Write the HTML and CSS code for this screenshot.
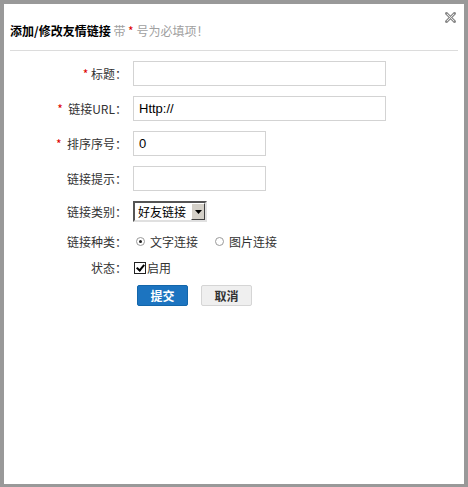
FILE: index.html
```html
<!DOCTYPE html>
<html lang="zh-CN">

<head>
    <meta charset="UTF-8">
    <meta name="viewport" content="width=device-width, initial-scale=1.0">
    <title>添加/修改友情链接</title>
    <link rel="stylesheet" href="styles.css">
</head>

<body>
    <div class="dialog">
        <div class="dialog-head">
            <h2>添加/修改友情链接 <span class="tip">带 <em>*</em> 号为必填项！</span></h2>
            <a href="#" class="close" title="关闭">
                <svg width="11" height="11" viewBox="0 0 11 11">
                    <path d="M1.5 1.5 L9.5 9.5 M9.5 1.5 L1.5 9.5" stroke="#8c8c8c" stroke-width="3" stroke-linecap="square" fill="none"/>
                    <path d="M2 2 L9 9 M9 2 L2 9" stroke="#e6e6e6" stroke-width="1" fill="none"/>
                </svg>
            </a>
        </div>

        <form class="link-form" action="#" method="post">
            <div class="row">
                <label for="title"><em>*</em> 标题：</label>
                <input type="text" id="title" name="title" class="text long">
            </div>
            <div class="row">
                <label for="url"><em>*</em>&nbsp; 链接URL：</label>
                <input type="text" id="url" name="url" class="text long" value="Http://">
            </div>
            <div class="row">
                <label for="sort"><em>*</em>&nbsp; 排序序号：</label>
                <input type="text" id="sort" name="sort" class="text short" value="0">
            </div>
            <div class="row">
                <label for="hint">链接提示：</label>
                <input type="text" id="hint" name="hint" class="text short">
            </div>
            <div class="row row-select">
                <label for="type">链接类别：</label>
                <div class="select">
                    <select id="type" name="type">
                        <option>好友链接</option>
                        <option>合作伙伴</option>
                    </select>
                    <span class="select-arrow">
                        <svg width="7" height="4" viewBox="0 0 7 4"><path d="M0 0 H7 L3.5 4 Z" fill="#000"/></svg>
                    </span>
                </div>
            </div>
            <div class="row row-radio">
                <label>链接种类：</label>
                <div class="options">
                    <label class="opt"><input type="radio" name="kind" value="text" checked>文字连接</label>
                    <label class="opt"><input type="radio" name="kind" value="image">图片连接</label>
                </div>
            </div>
            <div class="row row-check">
                <label for="status">状态：</label>
                <label class="opt check"><input type="checkbox" id="status" name="status" checked>启用</label>
            </div>
            <div class="row row-buttons">
                <span></span>
                <div class="buttons">
                    <button type="submit" class="btn btn-primary">提交</button>
                    <button type="button" class="btn">取消</button>
                </div>
            </div>
        </form>
    </div>
</body>

</html>
```

FILE: styles.css
```css
body {
    margin: 0;
    background: #999;
    font-family: "Noto Sans CJK TC", "Noto Sans CJK SC", "Liberation Sans", sans-serif;
    font-size: 12px;
    color: #333;
}

.dialog {
    position: relative;
    margin: 4px 4px 0 4px;
    height: 480px;
    background: #fff;
}

.dialog-head {
    margin: 0 6px;
    padding: 20px 0 12px;
    border-bottom: 1px solid #dcdcdc;
}

.dialog-head h2 {
    margin: 0;
    font-size: 12px;
    line-height: 14px;
    font-weight: bold;
    color: #000;
}

.tip {
    font-weight: normal;
    color: #a0a0a0;
}

em {
    font-style: normal;
    color: #d00;
}

.close {
    position: absolute;
    top: 8px;
    right: 8px;
    display: block;
    width: 11px;
    height: 11px;
}

.close svg {
    display: block;
}

.link-form {
    padding-top: 10px;
}

.row {
    display: flex;
    align-items: center;
    height: 25px;
    margin-bottom: 10px;
}

.row > label,
.row > span:first-child {
    box-sizing: border-box;
    flex: 0 0 120px;
    margin-right: 9px;
    padding-right: 0;
    text-align: right;
    color: #333;
}

.row > label {
    margin-right: 6px;
    flex-basis: 123px;
}

.text {
    box-sizing: border-box;
    height: 25px;
    margin: 0;
    padding: 0 5px;
    border: 1px solid #d3d3d3;
    font-family: "Liberation Sans", Arial, sans-serif;
    font-size: 13px;
    color: #000;
    outline: none;
}

.long {
    width: 253px;
}

.short {
    width: 133px;
}

.row-select {
    height: 21px;
}

.select {
    position: relative;
    box-sizing: border-box;
    width: 74px;
    height: 21px;
    border: 2px solid;
    border-color: #555 #e0e0e0 #e0e0e0 #555;
    background: #fff;
}

.select select {
    display: block;
    width: 100%;
    height: 17px;
    margin: 0;
    padding: 0 0 0 3px;
    border: 0;
    background: transparent;
    font-family: "Noto Sans CJK SC", sans-serif;
    font-size: 12px;
    color: #000;
    appearance: none;
    -webkit-appearance: none;
    outline: none;
}

.select-arrow {
    position: absolute;
    top: 0;
    right: 0;
    box-sizing: border-box;
    width: 14px;
    height: 17px;
    display: flex;
    align-items: center;
    justify-content: center;
    background: #d4d0c8;
    border: 1px solid;
    border-color: #fff #404040 #404040 #fff;
    pointer-events: none;
}

.row-radio {
    height: 18px;
    margin-bottom: 9px;
}

.options {
    display: flex;
    gap: 14px;
}

.opt {
    display: flex;
    align-items: center;
    color: #333;
}

.opt input[type="radio"] {
    appearance: none;
    -webkit-appearance: none;
    box-sizing: border-box;
    width: 9px;
    height: 9px;
    margin: 0 5px 0 3px;
    border: 1px solid #9a9a9a;
    border-radius: 50%;
    background: #fff;
    position: relative;
}

.opt input[type="radio"]:checked::after {
    content: "";
    position: absolute;
    left: 2px;
    top: 2px;
    width: 3px;
    height: 3px;
    border-radius: 50%;
    background: #222;
}

.row-check {
    height: 17px;
    margin-bottom: 9px;
}

.check input[type="checkbox"] {
    appearance: none;
    -webkit-appearance: none;
    box-sizing: border-box;
    width: 12px;
    height: 12px;
    margin: 0 1px 0 1px;
    border: 1px solid #222;
    background: #fff;
    position: relative;
}

.check input[type="checkbox"]:checked::after {
    content: "";
    position: absolute;
    left: 3px;
    top: 0;
    width: 3px;
    height: 6px;
    border: solid #000;
    border-width: 0 2px 2px 0;
    transform: rotate(40deg);
}

.row-buttons {
    height: 21px;
}

.buttons {
    display: flex;
    gap: 13px;
    padding-left: 4px;
}

.btn {
    box-sizing: border-box;
    width: 51px;
    height: 21px;
    margin: 0;
    padding: 0;
    border: 1px solid #d5d5d5;
    border-radius: 2px;
    background: #efefef;
    font-family: "Noto Sans CJK SC", sans-serif;
    font-size: 12px;
    font-weight: bold;
    color: #333;
    cursor: pointer;
}

.btn-primary {
    border-color: #1366aa;
    background: #1c74c0;
    color: #fff;
}
```
